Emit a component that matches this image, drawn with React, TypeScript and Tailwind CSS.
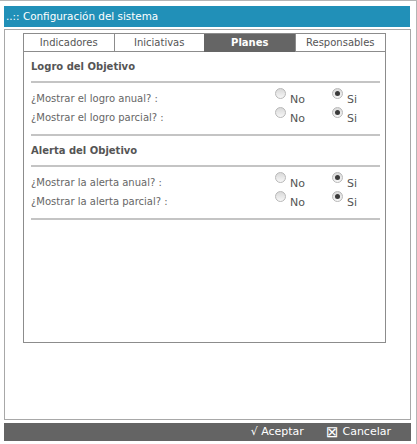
import { useState } from 'react';

const font = { fontFamily: '"DejaVu Sans", Verdana, sans-serif' };

export default function App() {
  const [tab, setTab] = useState('Planes');
  const [vals, setVals] = useState<Record<string, string>>({
    logroAnual: 'si',
    logroParcial: 'si',
    alertaAnual: 'si',
    alertaParcial: 'si',
  });

  const set = (k: string, v: string) => setVals({ ...vals, [k]: v });

  return (
    <div className="w-[417px] h-[444px] bg-white text-[10px]" style={font}>
      <div className="h-full border-t border-r border-[#b5b5b5] pl-[4px] pr-[5px] pt-[5px] flex flex-col">
        {/* Title */}
        <div className="h-[21px] bg-[#2190b8] text-white text-[10.4px] flex items-center pl-[2px] mr-[1px]">
          ..:: Configuración del sistema
        </div>

        {/* Body */}
        <div className="h-[391px] mt-[2px] border border-[#a8a8a8] pl-[18px] pr-[24px] pt-[3px]">
          <div className="h-[310px] border border-[#8c8c8c] border-t-0">
            {/* Tabs */}
            <div className="flex h-[19px] border-t border-[#8c8c8c]">
              {['Indicadores', 'Iniciativas', 'Planes', 'Responsables'].map((t, i) => (
                <button
                  key={t}
                  onClick={() => setTab(t)}
                  className={`flex-1 flex items-center justify-center border-b border-[#8c8c8c] ${
                    i > 0 ? 'border-l' : ''
                  } ${tab === t ? 'bg-[#656565] text-white font-bold border-[#656565]' : 'bg-white text-[#555]'}`}
                >
                  {t}
                </button>
              ))}
            </div>

            <div className="pl-[7px] pr-[5px]">
              <Section title="Logro del Objetivo">
                <Row label="¿Mostrar el logro anual? :" value={vals.logroAnual} onChange={(v) => set('logroAnual', v)} />
                <Row label="¿Mostrar el logro parcial? :" value={vals.logroParcial} onChange={(v) => set('logroParcial', v)} />
              </Section>
              <Section title="Alerta del Objetivo">
                <Row label="¿Mostrar la alerta anual? :" value={vals.alertaAnual} onChange={(v) => set('alertaAnual', v)} />
                <Row label="¿Mostrar la alerta parcial? :" value={vals.alertaParcial} onChange={(v) => set('alertaParcial', v)} />
              </Section>
            </div>
          </div>
        </div>

        {/* Footer */}
        <div className="h-[18px] mt-[3px] bg-[#646464] text-white text-[11px] flex items-center justify-end pr-[20px] gap-[22px]">
          <span>√ Aceptar</span>
          <span className="flex items-center gap-[4px]">
            <span className="text-[15px] leading-none">⊠</span>Cancelar
          </span>
        </div>
      </div>
    </div>
  );
}

function Section({ title, children }: { title: string; children: React.ReactNode }) {
  return (
    <div>
      <div className="h-[29px] flex items-center font-bold text-[#555]">{title}</div>
      <div className="border-t-2 border-[#c4c4c4]" />
      <div className="pt-[6px] pb-[7px]">{children}</div>
      <div className="border-t-2 border-[#c4c4c4]" />
    </div>
  );
}

function Row({ label, value, onChange }: { label: string; value: string; onChange: (v: string) => void }) {
  return (
    <div className="h-[19px] flex items-center text-[#666]">
      <span className="flex-1">{label}</span>
      <Radio label="No" checked={value === 'no'} onClick={() => onChange('no')} />
      <div className="w-[24px]" />
      <Radio label="Si" checked={value === 'si'} onClick={() => onChange('si')} />
      <div className="w-[15px]" />
    </div>
  );
}

function Radio({ label, checked, onClick }: { label: string; checked: boolean; onClick: () => void }) {
  return (
    <button onClick={onClick} className="flex items-start gap-[4px] w-[33px] text-[#555] text-[11px]">
      <span className="mt-[-1px] w-[11px] h-[11px] rounded-full border border-[#b8b8b8] bg-gradient-to-b from-[#d9d9d9] to-[#f7f7f7] flex items-center justify-center">
        {checked && <span className="w-[5px] h-[5px] rounded-full bg-[#3a3a3a]" />}
      </span>
      <span className="mt-[3px]">{label}</span>
    </button>
  );
}
